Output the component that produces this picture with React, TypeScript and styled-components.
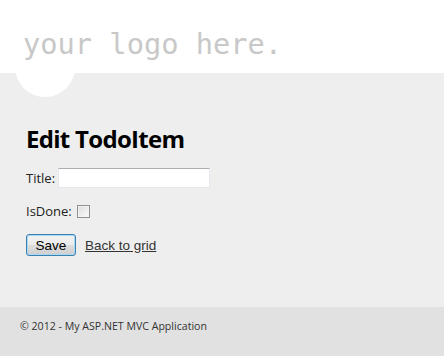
import styled, { createGlobalStyle } from 'styled-components'

const GlobalStyle = createGlobalStyle`
  html, body {
    margin: 0;
    padding: 0;
    background: #eeeeee;
  }
  body {
    font-family: 'Open Sans', 'Liberation Sans', sans-serif;
    font-size: 13px;
    color: #333;
  }
`

const Page = styled.div`
  display: flex;
  flex-direction: column;
  min-height: 356px;
`

const Header = styled.header`
  position: relative;
  height: 73px;
  background: #ffffff;
  padding: 27px 0 0 23px;
  box-sizing: border-box;
`

const SiteTitle = styled.div`
  position: relative;
  z-index: 1;
  font-family: 'DejaVu Sans Mono', 'Liberation Mono', monospace;
  font-size: 28.7px;
  line-height: 34px;
  color: #c8c8c8;
`

const Bubble = styled.div`
  position: absolute;
  left: 15px;
  top: 37px;
  width: 60px;
  height: 60px;
  border-radius: 50%;
  background: #ffffff;
`

const Main = styled.main`
  flex: 1;
  padding: 50px 0 0 26px;
`

const Heading = styled.h2`
  margin: 0 0 13px;
  font-size: 24px;
  line-height: 32px;
  font-weight: 700;
  letter-spacing: -0.7px;
  color: #000;
`

const Field = styled.div`
  display: flex;
  align-items: center;
  gap: 3px;
  margin-bottom: 14px;
  color: #222;
`

const TextInput = styled.input`
  box-sizing: border-box;
  width: 152px;
  height: 20px;
  margin: 0;
  border: 1px solid #e3e9ef;
  border-top-color: #abadb3;
  background: #fff;
`

const Check = styled.input`
  appearance: none;
  box-sizing: border-box;
  width: 13px;
  height: 13px;
  margin: 0 0 0 2px;
  border: 1px solid #8f8f8f;
  background: linear-gradient(135deg, #dcdcdc, #fbfbfb);
  box-shadow: inset 0 0 0 1px #f4f4f4;
`

const Actions = styled.div`
  display: flex;
  align-items: center;
  gap: 9px;
  margin-top: 10px;
`

const Button = styled.button`
  box-sizing: border-box;
  width: 50px;
  height: 22px;
  padding: 0;
  border: 1px solid #3c7fb1;
  border-radius: 3px;
  background: linear-gradient(#f2f2f2 0%, #ebebeb 50%, #dddddd 51%, #cfcfcf 100%);
  box-shadow: inset 0 0 0 1px #a7d9f5;
  font-family: 'Liberation Sans', Arial, sans-serif;
  font-size: 13.5px;
  color: #000;
`

const BackLink = styled.a`
  font-family: 'Liberation Sans', Arial, sans-serif;
  font-size: 13.5px;
  color: #333;
  text-decoration: underline;
`

const Footer = styled.footer`
  height: 49px;
  background: #e1e1e1;
  padding: 12px 0 0 20px;
  box-sizing: border-box;
  font-size: 10.6px;
  color: #333;
`

export default function App() {
  return (
    <Page>
      <GlobalStyle />
      <Header>
        <Bubble />
        <SiteTitle>your logo here.</SiteTitle>
      </Header>
      <Main>
        <Heading>Edit TodoItem</Heading>
        <Field>
          <label htmlFor="title">Title:</label>
          <TextInput id="title" type="text" />
        </Field>
        <Field>
          <label htmlFor="done">IsDone:</label>
          <Check id="done" type="checkbox" />
        </Field>
        <Actions>
          <Button type="button">Save</Button>
          <BackLink href="#">Back to grid</BackLink>
        </Actions>
      </Main>
      <Footer>© 2012 - My ASP.NET MVC Application</Footer>
    </Page>
  )
}
